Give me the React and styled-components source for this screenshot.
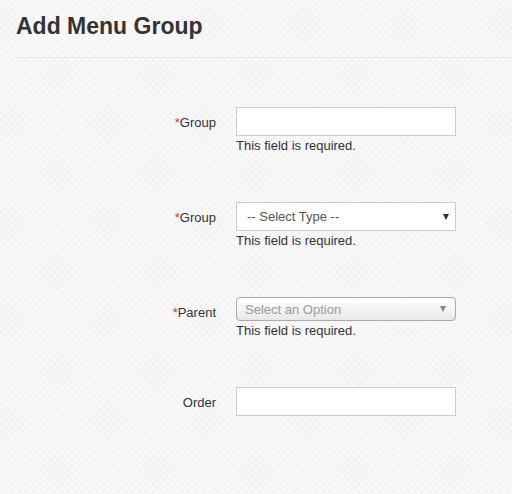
import React from "react";
import styled, { createGlobalStyle } from "styled-components";

const Global = createGlobalStyle`
  html, body { margin: 0; padding: 0; }
  body {
    width: 512px;
    height: 494px;
    overflow: hidden;
    font-family: "Liberation Sans", Arial, sans-serif;
    color: #333;
    background-color: #f8f8f8;
    background-image:
      repeating-linear-gradient(45deg, rgba(0,0,0,0.018) 0 1px, transparent 1px 5px),
      repeating-linear-gradient(-45deg, rgba(0,0,0,0.018) 0 1px, transparent 1px 5px);
  }
`;

const Page = styled.div`
  padding: 0 0 0 16px;
`;

const Header = styled.div`
  padding-top: 13px;
  border-bottom: 1px solid #e6e6e6;
  height: 58px;
  box-sizing: border-box;
`;

const Title = styled.h1`
  margin: 0;
  font-size: 23px;
  font-weight: bold;
  color: #333;
  line-height: 26px;
`;

const Form = styled.form`
  display: flex;
  flex-direction: column;
  gap: 47px;
  padding-top: 49px;
`;

const Group = styled.div`
  display: flex;
  align-items: flex-start;
  gap: 20px;
`;

const Label = styled.label`
  width: 200px;
  text-align: right;
  font-size: 13px;
  line-height: 17px;
  padding-top: 7px;
  color: #333;
`;

const Star = styled.span`
  color: #e03030;
`;

const Field = styled.div`
  width: 220px;
  display: flex;
  flex-direction: column;
`;

const TextInput = styled.div`
  height: 29px;
  box-sizing: border-box;
  border: 1px solid #ccc;
  background: #fff;
`;

const NativeSelect = styled.div`
  height: 29px;
  box-sizing: border-box;
  border: 1px solid #ccc;
  background: #fff;
  display: flex;
  align-items: center;
  justify-content: space-between;
  padding: 0 6px 0 10px;
  font-size: 13px;
  color: #555;
`;

const FancySelect = styled.div`
  height: 24px;
  box-sizing: border-box;
  border: 1px solid #aaa;
  border-radius: 4px;
  background: linear-gradient(#ffffff 0%, #f4f4f4 50%, #e8e8e8 100%);
  display: flex;
  align-items: center;
  justify-content: space-between;
  padding: 0 9px 0 8px;
  font-size: 13px;
  color: #999;
`;

const Arrow = styled.span`
  width: 0;
  height: 0;
  border-left: 3.5px solid transparent;
  border-right: 3.5px solid transparent;
  border-top: 6px solid ${(p) => p.$color};
`;

const Help = styled.div`
  font-size: 13px;
  line-height: 19px;
  color: #333;
`;

export default function App() {
  return (
    <>
      <Global />
      <Page>
        <Header>
          <Title>Add Menu Group</Title>
        </Header>
        <Form>
          <Group>
            <Label><Star>*</Star>Group</Label>
            <Field>
              <TextInput />
              <Help>This field is required.</Help>
            </Field>
          </Group>
          <Group>
            <Label><Star>*</Star>Group</Label>
            <Field>
              <NativeSelect>
                <span>-- Select Type --</span>
                <Arrow $color="#333" />
              </NativeSelect>
              <Help>This field is required.</Help>
            </Field>
          </Group>
          <Group>
            <Label><Star>*</Star>Parent</Label>
            <Field>
              <FancySelect>
                <span>Select an Option</span>
                <Arrow $color="#888" />
              </FancySelect>
              <Help>This field is required.</Help>
            </Field>
          </Group>
          <Group>
            <Label>Order</Label>
            <Field>
              <TextInput />
            </Field>
          </Group>
        </Form>
      </Page>
    </>
  );
}
